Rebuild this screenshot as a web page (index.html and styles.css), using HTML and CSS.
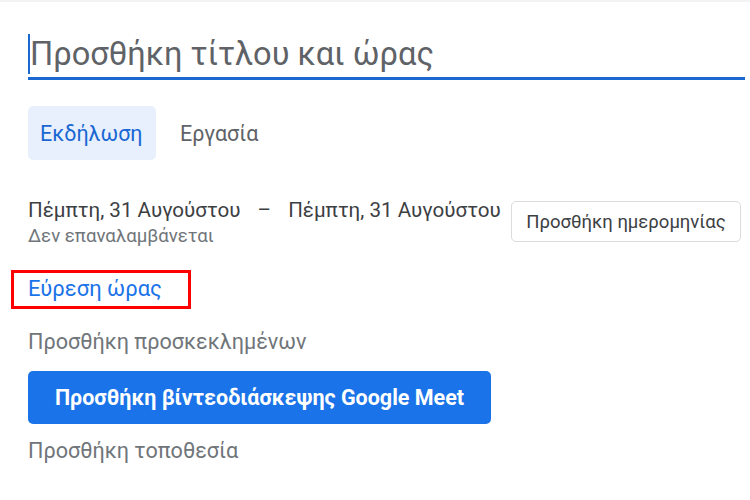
FILE: index.html
```html
<!DOCTYPE html>
<html lang="el">
<head>
<meta charset="utf-8">
<link rel="stylesheet" href="styles.css">
</head>
<body>
<div class="topband"></div>
<main class="form">
  <div class="title">
    <span class="caret"></span>
    <span class="title-text">Προσθήκη τίτλου και ώρας</span>
  </div>
  <div class="tabs">
    <span class="tab active">Εκδήλωση</span>
    <span class="tab">Εργασία</span>
  </div>
  <div class="date-row">
    <div class="date-info">
      <div class="date-text"><span>Πέμπτη, 31 Αυγούστου</span><span class="dash">–</span><span>Πέμπτη, 31 Αυγούστου</span></div>
      <div class="repeat">Δεν επαναλαμβάνεται</div>
    </div>
    <button class="date-btn">Προσθήκη ημερομηνίας</button>
  </div>
  <div class="find-time"><span class="link">Εύρεση ώρας</span></div>
  <div class="field guests">Προσθήκη προσκεκλημένων</div>
  <button class="meet-btn">Προσθήκη βίντεοδιάσκεψης Google Meet</button>
  <div class="field loc">Προσθήκη τοποθεσία</div>
</main>
</body>
</html>
```

FILE: styles.css
```css
* { box-sizing: border-box; }
html, body { margin: 0; padding: 0; background: #fff; }
body { font-family: Roboto, "Noto Sans", Arial, sans-serif; color: #3c4043; width: 750px; height: 500px; overflow: hidden; }
.topband { height: 2px; background: #f1f3f4; }
.form { padding: 0 5px 0 28px; }
.title { margin-top: 30px; height: 48px; display: flex; align-items: flex-start; border-bottom: 3px solid #1a68d0; }
.caret { width: 2px; height: 40px; margin-top: 2px; background: #1a68d0; }
.title-text { font-size: 32.6px; line-height: 45px; color: #5f6368; margin-left: 0; }
.tabs { margin-top: 26px; display: flex; }
.tab { height: 54px; display: flex; align-items: center; padding: 0 11px 0 12px; border-radius: 5px; font-size: 21.5px; color: #5f6368; }
.tab.active { background: #e8f0fe; color: #1967d2; width: 128px; margin-right: 12px; }
.date-row { margin-top: 38px; display: flex; align-items: flex-start; justify-content: space-between; }
.date-text { font-size: 20.6px; line-height: 24px; color: #3c4043; white-space: nowrap; }
.dash { margin: 0 17px; }
.repeat { margin-top: 3px; font-size: 18.6px; line-height: 22px; color: #70757a; }
.date-btn { margin: 3px 4px 0 0; width: 230px; height: 41px; border: 1px solid #dadce0; border-radius: 5px; background: #fff; font-family: inherit; font-size: 18.5px; color: #3c4043; padding: 0; }
.find-time { margin-top: 23px; margin-left: -17px; width: 180px; height: 39px; border: 3px solid #f00; padding: 1px 0 0 14px; }
.link { font-size: 22px; line-height: 29px; color: #1a73e8; }
.field { font-size: 21.6px; line-height: 24px; color: #70757a; }
.guests { margin-top: 21px; }
.meet-btn { display: block; margin-top: 17px; width: 463px; height: 53px; border: 0; border-radius: 5px; background: #1a73e8; color: #fff; font-family: inherit; font-size: 21.5px; font-weight: 700; padding: 0; }
.loc { margin-top: 15px; }
```
